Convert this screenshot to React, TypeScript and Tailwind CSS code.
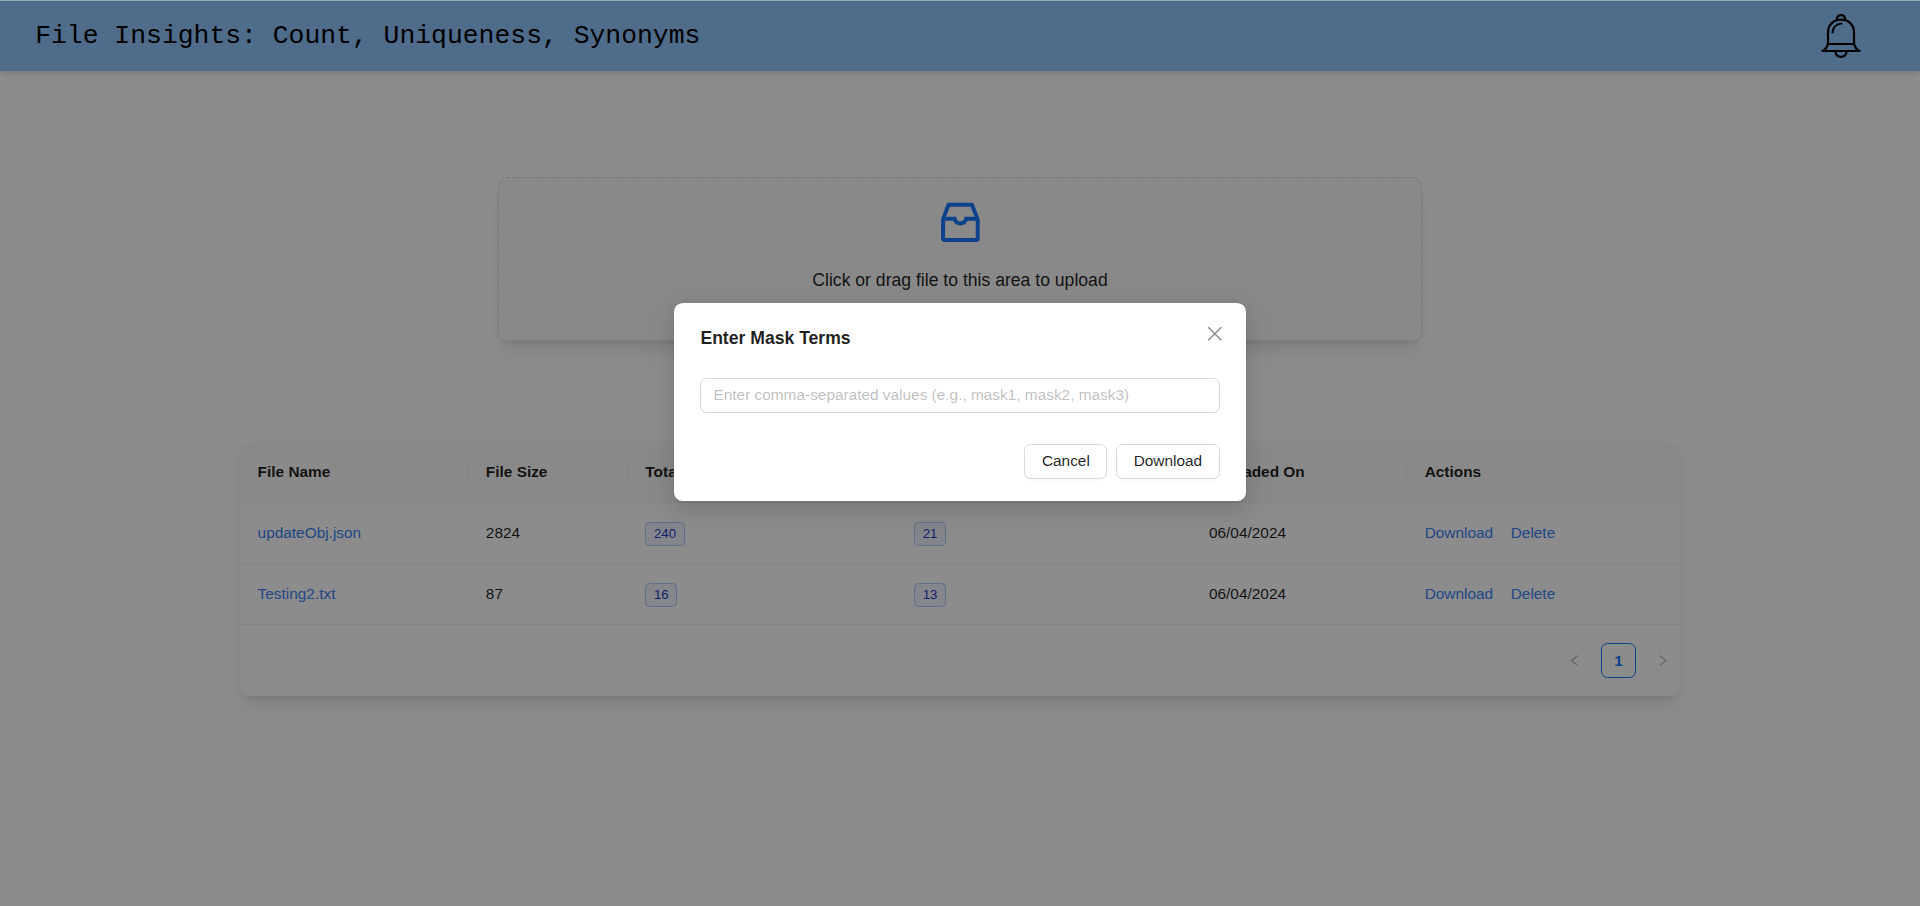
import React from "react";

const rows = [
  { name: "updateObj.json", size: "2824", total: "240", unique: "21", date: "06/04/2024" },
  { name: "Testing2.txt", size: "87", total: "16", unique: "13", date: "06/04/2024" },
];

const columns = [
  { label: "File Name", width: "w-[207.5px]" },
  { label: "File Size", width: "w-[145px]" },
  { label: "Total Words", width: "w-[244.2px]" },
  { label: "Unique Words", width: "w-[268.2px]" },
  { label: "Uploaded On", width: "w-[196.1px]" },
  { label: "Actions", width: "" },
];

function BellIcon() {
  return (
    <svg viewBox="0 0 40 44" className="h-10 w-[36.4px]" fill="none" stroke="#000" strokeWidth="2.2" strokeLinecap="round" strokeLinejoin="round">
      <path d="M15.700 5.400C16 2.600 17.600 1.200 20 1.200s4 1.400 4.300 4.200" />
      <path d="M7 29V18.500C7 10.500 12.500 5.700 20 5.700S33 10.500 33 18.500V29c.5 4 2 6.500 5.600 8H1.400C5 35.500 6.500 33 7 29z" />
      <path d="M7 30h26M14.500 38c.5 3 2.700 4.800 5.500 4.800s5-1.800 5.500-4.800M11.500 18.500c.3-4.800 3.500-8.500 9-9" />
    </svg>
  );
}

function InboxIcon() {
  return (
    <svg viewBox="0 0 1024 1024" className="h-12 w-12 fill-[#1677ff]">
      <path d="M885.200 446.300l-.2-.8-112.200-285.100c-5-16.100-19.900-27.200-36.800-27.200H281.200c-17 0-32.100 11.300-36.900 27.600L139.400 443l-.3.700-.2.800c-1.300 4.900-1.700 9.900-1 14.800-.1 1.600-.2 3.200-.2 4.800V830a60.900 60.900 0 0 0 60.800 60.800h627.200c33.500 0 60.800-27.300 60.900-60.800V464.100c0-1.300 0-2.600-.1-3.700.4-4.900 0-9.600-1.300-14.100zm-295.800-43l-.3 15.700c-.8 44.900-31.800 75.100-77.100 75.100-22.100 0-41.100-7.100-54.800-20.600S436 441.200 435.600 419l-.3-15.700H229.500L309 210h399.200l81.700 193.300H589.400zm-375 76.800h157.300c24.300 57.100 76 90.800 140.400 90.800 33.700 0 65-9.400 90.300-27.200 22.200-15.600 39.500-37.400 50.700-63.600h156.500V814H214.400V480.100z" />
    </svg>
  );
}

function Tag({ children }: { children: React.ReactNode }) {
  return (
    <span className="mt-px -mb-px inline-block rounded border border-[#adc6ff] bg-[#f0f5ff] px-[7px] align-top text-xs leading-5 text-[#1d39c4]">{children}</span>
  );
}

function Chevron({ flip }: { flip?: boolean }) {
  return (
    <span className="flex h-8 w-8 items-center justify-center">
      <svg viewBox="0 0 1024 1024" className={flip ? "h-3.5 w-3.5 -scale-x-100 fill-black/30" : "h-3.5 w-3.5 fill-black/30"}>
        <path d="M724 218.300V141c0-6.700-7.700-10.400-12.900-6.300L260.300 486.800a31.860 31.860 0 0 0 0 50.300l450.800 352.100c5.300 4.100 12.900.4 12.900-6.300v-77.300c0-4.900-2.300-9.600-6.100-12.600l-360-281 360-281.100c3.800-3 6.100-7.700 6.100-12.600z" />
      </svg>
    </span>
  );
}

export default function App() {
  return (
    <div className="relative h-screen overflow-hidden bg-white">
      <div className="h-full pt-px font-['Liberation_Sans',Arial,sans-serif] text-sm leading-[22px] text-black/88 [zoom:1.1]">
        <header className="flex h-16 items-center justify-between bg-[#93c5fd] pl-8 pr-[53.6px] shadow-md">
          <h1 className="font-['Liberation_Mono',monospace] text-2xl text-black">File Insights: Count, Uniqueness, Synonyms</h1>
          <BellIcon />
        </header>

        <main>
          <section className="mx-auto mt-24 flex h-[149px] w-[840px] flex-col items-center rounded-lg border border-dashed border-[#d9d9d9] bg-black/2 pt-4 shadow-lg">
            <InboxIcon />
            <p className="mt-[17px] text-base leading-6">Click or drag file to this area to upload</p>
          </section>

          <section className="mx-auto mt-[92px] w-3/4 overflow-hidden rounded-lg bg-white shadow-lg">
            <table className="w-full table-fixed border-separate border-spacing-0 text-left">
              <thead>
                <tr className="bg-[#fafafa]">
                  {columns.map((c, i) => (
                    <th key={c.label} className={`${c.width} border-b border-[#f0f0f0] p-0 py-4 font-semibold`}>
                      <div className={i < columns.length - 1 ? "border-r border-[#f0f0f0] px-4" : "px-4"}>{c.label}</div>
                    </th>
                  ))}
                </tr>
              </thead>
              <tbody>
                {rows.map((r) => (
                  <tr key={r.name} className="h-[55.5px]">
                    <td className="border-b border-[#f0f0f0] px-4 pt-[0.7px] text-[#3b82f6]">{r.name}</td>
                    <td className="border-b border-[#f0f0f0] px-4 pt-[0.7px]">{r.size}</td>
                    <td className="border-b border-[#f0f0f0] px-4"><Tag>{r.total}</Tag></td>
                    <td className="border-b border-[#f0f0f0] px-4"><Tag>{r.unique}</Tag></td>
                    <td className="border-b border-[#f0f0f0] px-4 pt-[0.7px]">{r.date}</td>
                    <td className="border-b border-[#f0f0f0] px-4 pt-[0.7px] text-[#3b82f6]">
                      <span className="mr-4">Download</span>
                      <span>Delete</span>
                    </td>
                  </tr>
                ))}
              </tbody>
            </table>
            <div className="flex items-center justify-end gap-2 pb-4 pt-[16.5px]">
              <Chevron />
              <span className="flex h-8 w-8 items-center justify-center rounded-md border border-[#1677ff] pt-[0.5px] font-semibold text-[#1677ff]">1</span>
              <Chevron flip />
            </div>
          </section>
        </main>
      </div>

      <div className="absolute inset-0 border-t border-[#8cb4b4] bg-black/45">
        <div className="font-['Liberation_Sans',Arial,sans-serif] text-sm leading-[22px] text-black/88 [zoom:1.1]">
          <div role="dialog" className="relative mx-auto mt-[274.6px] w-[520px] rounded-lg bg-white px-6 py-5 shadow-[0_6px_16px_0_rgba(0,0,0,0.08),0_3px_6px_-4px_rgba(0,0,0,0.12),0_9px_28px_8px_rgba(0,0,0,0.05)]">
            <h2 className="mb-6 text-base font-semibold leading-6">Enter Mask Terms</h2>
            <button aria-label="Close" className="absolute right-[17px] top-[17px] flex h-[22px] w-[22px] items-center justify-center">
              <svg viewBox="0 0 16 16" className="h-4 w-4" fill="none" stroke="rgba(0,0,0,0.45)" strokeWidth="1.4">
                <path d="M2.100 2.100l11.800 11.800M13.900 2.100L2.100 13.900" />
              </svg>
            </button>
            <input className="block h-8 w-full rounded-md border border-[#d9d9d9] px-[11px] placeholder:text-black/27" placeholder="Enter comma-separated values (e.g., mask1, mask2, mask3)" />
            <div className="mt-[27.8px] flex justify-end gap-2">
              <button className="h-8 rounded-md border border-[#d9d9d9] bg-white px-[15px] shadow-[0_2px_0_rgba(0,0,0,0.02)]">Cancel</button>
              <button className="h-8 rounded-md border border-[#d9d9d9] bg-white px-[15px] shadow-[0_2px_0_rgba(0,0,0,0.02)]">Download</button>
            </div>
          </div>
        </div>
      </div>
    </div>
  );
}
